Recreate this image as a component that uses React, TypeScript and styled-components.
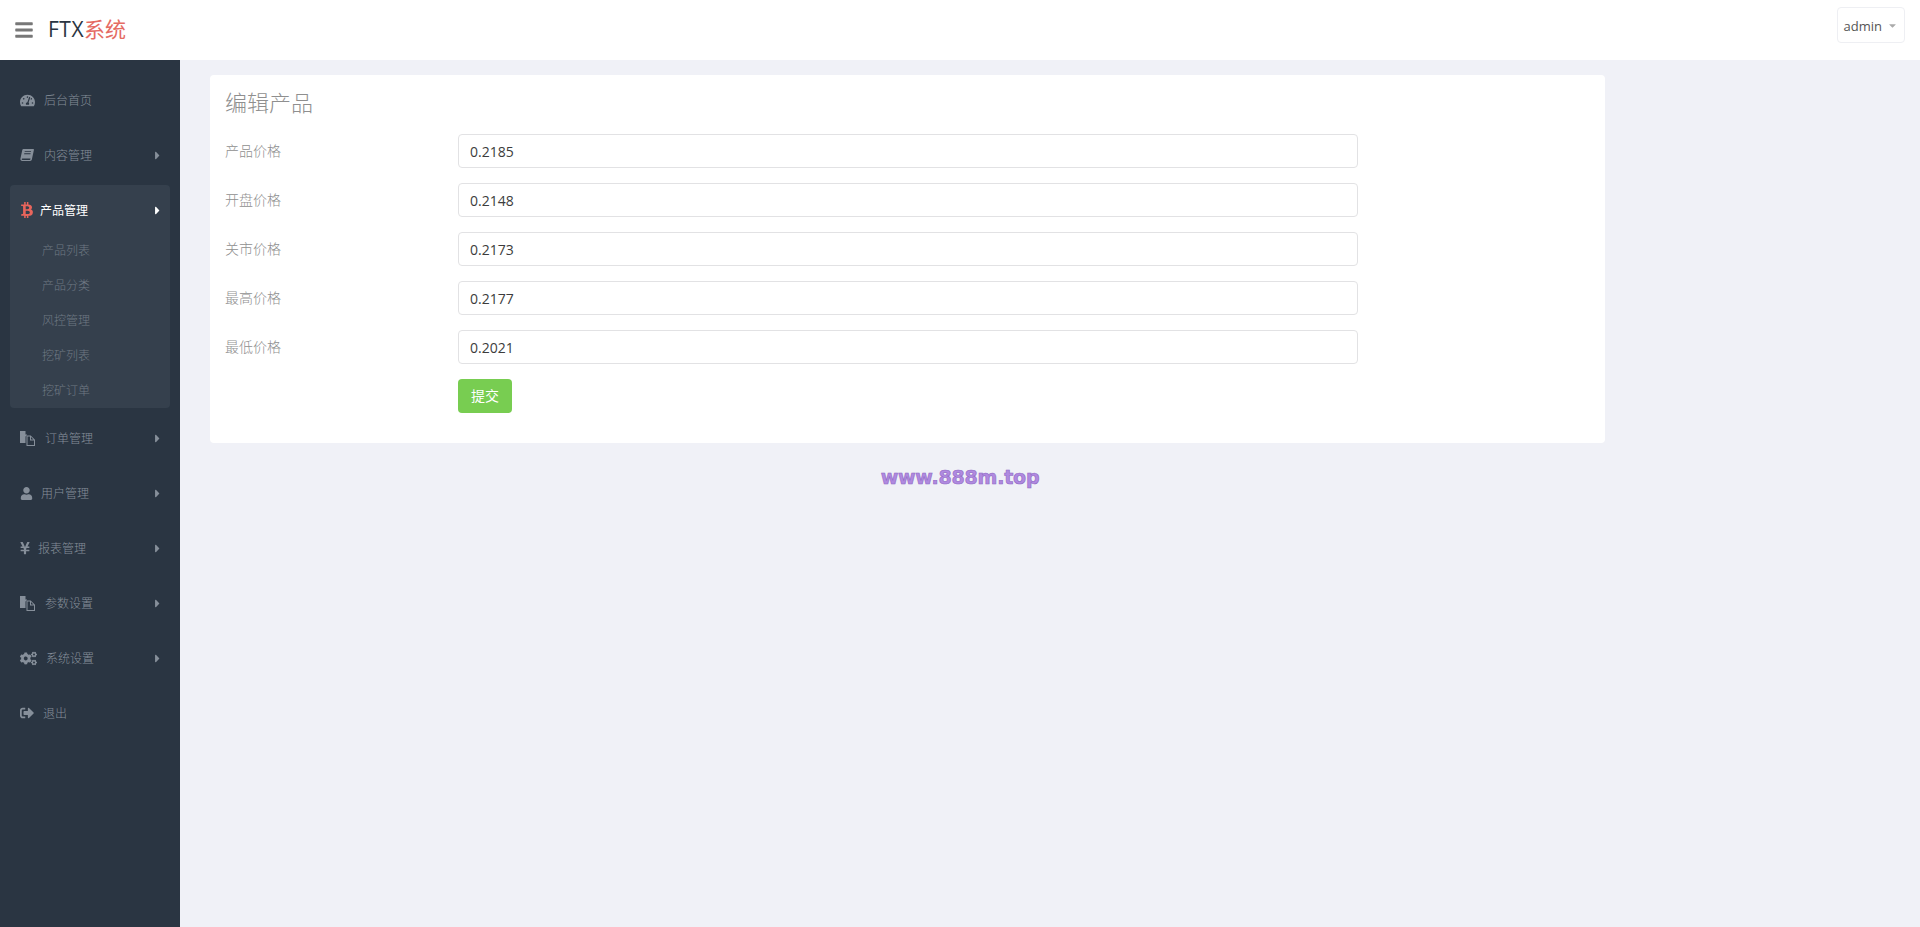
import React from 'react';
import styled, {createGlobalStyle} from 'styled-components';
import {FaBars, FaBtc, FaCaretDown, FaCaretRight, FaCogs, FaSignOutAlt, FaTachometerAlt, FaUser, FaYenSign} from 'react-icons/fa';

const FONT = `"Open Sans", "Noto Sans CJK SC", sans-serif`;

const GlobalStyle = createGlobalStyle`
  html, body {
    margin: 0;
    background: #f0f1f7;
    font-family: ${FONT};
  }
  * {
    box-sizing: border-box;
  }
`;

const Page = styled.div`
  position: relative;
  display: flex;
  flex-direction: column;
  min-height: 927px;
`;

const Header = styled.header`
  display: flex;
  align-items: flex-start;
  height: 60px;
  padding: 0 15px 0 14px;
  background: #fff;
`;

const MenuToggle = styled.span`
  display: flex;
  width: 34px;
  margin-top: 20px;
  color: #777;
  font-size: 20px;
`;

const Brand = styled.div`
  margin-top: 14px;
  font-size: 21px;
  line-height: 30px;
  letter-spacing: 0.5px;
  color: #2a3542;
  span {
    letter-spacing: 0;
    color: #e56b63;
  }
`;

const UserButton = styled.div`
  display: flex;
  align-items: center;
  gap: 5px;
  height: 36px;
  margin-top: 7px;
  margin-left: auto;
  padding: 1px 6px 0;
  border: 1px solid #eeeff3;
  border-radius: 4px;
  font-size: 13px;
  color: #555;
  svg {
    color: #aaa;
    font-size: 11px;
  }
`;

const Body = styled.div`
  display: flex;
  flex: 1;
`;

const Sidebar = styled.aside`
  width: 180px;
  padding: 15px 10px;
  background: #2a3542;
`;

const NavItem = styled.div<{$active?: boolean}>`
  display: flex;
  align-items: center;
  height: 50px;
  margin-bottom: ${({$active}) => ($active ? 0 : '5px')};
  padding: 0 10px;
  font-size: 12px;
  font-weight: ${({$active}) => ($active ? 400 : 300)};
  color: ${({$active}) => ($active ? '#fff' : '#868f9a')};
`;

const NavIcon = styled.span<{$width: number; $active?: boolean}>`
  display: flex;
  align-items: center;
  flex: none;
  width: ${({$width}) => $width}px;
  font-size: 14px;
  color: ${({$active}) => ($active ? '#e8655c' : '#868f9a')};
`;

const NavArrow = styled.span`
  display: flex;
  margin-left: auto;
  margin-right: -4px;
  font-size: 13px;
`;

const NavGroup = styled.div`
  margin-bottom: 5px;
  border-radius: 4px;
  background: #35404d;
`;

const SubList = styled.div`
  margin-top: -2px;
`;

const SubItem = styled.div`
  display: flex;
  align-items: center;
  height: 35px;
  padding: 0 0 2px 32px;
  font-size: 12px;
  font-weight: 300;
  color: #6f7984;
`;

const Main = styled.main`
  flex: 1;
  padding: 15px 0 0 30px;
`;

const Card = styled.section`
  width: 1395px;
  padding: 11px 15px 30px;
  border-radius: 4px;
  background: #fff;
`;

const Title = styled.h2`
  margin: 0 0 15px;
  font-size: 22px;
  font-weight: 300;
  line-height: 33px;
  color: #8f8f8f;
`;

const FormRow = styled.div`
  display: flex;
  align-items: center;
  height: 34px;
  margin-bottom: 15px;
  &:last-child {
    margin-bottom: 0;
  }
`;

const Label = styled.label`
  flex: none;
  width: 233px;
  padding-bottom: 2px;
  font-size: 14px;
  font-weight: 300;
  color: #8f8f8f;
`;

const Input = styled.input`
  width: 900px;
  height: 34px;
  padding: 0 11px;
  border: 1px solid #e2e2e4;
  border-radius: 4px;
  outline: none;
  font-family: ${FONT};
  font-size: 14px;
  color: #3c3c3c;
`;

const SubmitButton = styled.button`
  width: 54px;
  height: 34px;
  margin-left: 233px;
  padding: 0 0 2px;
  border: none;
  border-radius: 4px;
  background: #78cd51;
  font-family: ${FONT};
  font-size: 14px;
  color: #fff;
`;

const Watermark = styled.div`
  position: absolute;
  top: 463px;
  left: 50%;
  transform: translateX(-50%);
  font-family: "DejaVu Sans", sans-serif;
  font-size: 19px;
  font-weight: 700;
  line-height: 28px;
  letter-spacing: -0.2px;
  color: #b08ae0;
  -webkit-text-stroke: 0.6px #8f68c4;
`;

const YenIcon = styled(FaYenSign)`
  margin-left: -2px;
`;

const BtcIcon = styled(FaBtc)`
  margin-left: -1px;
`;

const BookIcon = () => (
  <svg width="14" height="14" viewBox="0 0 14 14" fill="currentColor">
    <path d="M3.4 1h9.8c.5 0 .8.4.7.9l-2 9.4c-.2.9-.8 1.7-1.8 1.7H2.2C1 13 .2 12 .4 10.8L2.3 2c.1-.6.6-1 1.1-1zm1.4 2.2-.2.9h6.3l.2-.9H4.8zm-.5 2.1-.2.9h6.3l.2-.9H4.3zM2.4 10.4c-.3 0-.7.3-.7.8s.3.7.7.7h7.3c.3 0 .5-.2.6-.5l.2-1H2.4z" fillRule="evenodd"/>
  </svg>
);

const FilesIcon = () => (
  <svg width="15" height="15" viewBox="0 0 15 15" fill="currentColor">
    <path d="M0 0h5.5v3.5H7v.5L5.5 5.5V12H0z"/>
    <path d="M6.5 4.5h4.2l4.3 4.2V15H6.5zm1 1V14h6.5V9.5h-4v-4zm3.5.5v2.5h2.5z" fillRule="evenodd"/>
  </svg>
);

interface MenuEntry {
  title: string,
  icon: React.ReactNode,
  iconWidth: number,
  arrow?: boolean,
}

const topMenu: MenuEntry[] = [
  {title: '后台首页', icon: <FaTachometerAlt size={15}/>, iconWidth: 24},
  {title: '内容管理', icon: <BookIcon/>, iconWidth: 24, arrow: true},
];

const bottomMenu: MenuEntry[] = [
  {title: '订单管理', icon: <FilesIcon/>, iconWidth: 25, arrow: true},
  {title: '用户管理', icon: <FaUser size={13}/>, iconWidth: 21, arrow: true},
  {title: '报表管理', icon: <YenIcon size={14}/>, iconWidth: 18, arrow: true},
  {title: '参数设置', icon: <FilesIcon/>, iconWidth: 25, arrow: true},
  {title: '系统设置', icon: <FaCogs size={17}/>, iconWidth: 26, arrow: true},
  {title: '退出', icon: <FaSignOutAlt size={14}/>, iconWidth: 23},
];

const subMenu = ['产品列表', '产品分类', '风控管理', '挖矿列表', '挖矿订单'];

const fields = [
  {label: '产品价格', value: '0.2185'},
  {label: '开盘价格', value: '0.2148'},
  {label: '关市价格', value: '0.2173'},
  {label: '最高价格', value: '0.2177'},
  {label: '最低价格', value: '0.2021'},
];

const renderEntry = ({title, icon, iconWidth, arrow}: MenuEntry) => (
  <NavItem key={title}>
    <NavIcon $width={iconWidth}>{icon}</NavIcon>
    {title}
    {arrow && <NavArrow><FaCaretRight/></NavArrow>}
  </NavItem>
);

const App = () => {
  return (
    <Page>
      <GlobalStyle/>
      <Header>
        <MenuToggle><FaBars/></MenuToggle>
        <Brand>FTX<span>系统</span></Brand>
        <UserButton>admin <FaCaretDown/></UserButton>
      </Header>
      <Body>
        <Sidebar>
          {topMenu.map(renderEntry)}
          <NavGroup>
            <NavItem $active>
              <NavIcon $width={20} $active><BtcIcon size={16}/></NavIcon>
              产品管理
              <NavArrow><FaCaretRight/></NavArrow>
            </NavItem>
            <SubList>
              {subMenu.map((item) => <SubItem key={item}>{item}</SubItem>)}
            </SubList>
          </NavGroup>
          {bottomMenu.map(renderEntry)}
        </Sidebar>
        <Main>
          <Card>
            <Title>编辑产品</Title>
            {fields.map(({label, value}) => (
              <FormRow key={label}>
                <Label>{label}</Label>
                <Input value={value} readOnly/>
              </FormRow>
            ))}
            <FormRow>
              <SubmitButton>提交</SubmitButton>
            </FormRow>
          </Card>
        </Main>
      </Body>
      <Watermark>www.888m.top</Watermark>
    </Page>
  );
};

export default App;
